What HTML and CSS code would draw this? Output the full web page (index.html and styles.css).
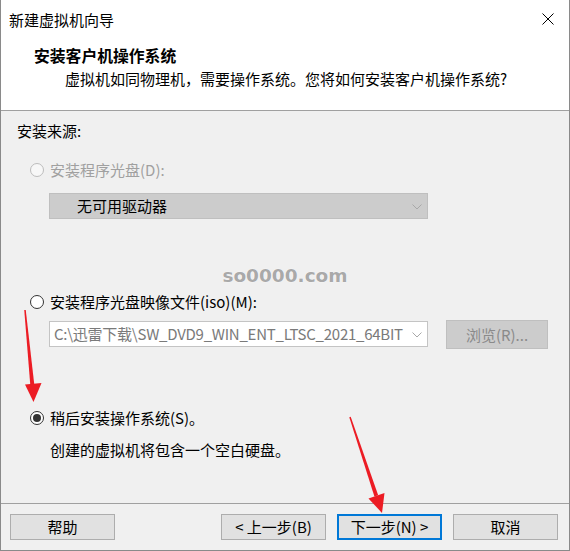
FILE: index.html
```html
<!DOCTYPE html>
<html lang="zh-CN">
<head>
<meta charset="utf-8">
<title>新建虚拟机向导</title>
<link rel="stylesheet" href="styles.css">
</head>
<body>
<div class="window">
  <div class="titlebar">
    <span class="title">新建虚拟机向导</span>
    <span class="close">
      <svg width="12" height="12" viewBox="0 0 12 12"><path d="M0.5 0.5 L11.5 11.5 M11.5 0.5 L0.5 11.5" stroke="#000" stroke-width="1" fill="none"/></svg>
    </span>
  </div>
  <div class="header">
    <div class="h-title">安装客户机操作系统</div>
    <div class="h-sub">虚拟机如同物理机，需要操作系统。您将如何安装客户机操作系统?</div>
  </div>
  <div class="main">
    <div class="source-label">安装来源:</div>
    <div class="option disabled"><span class="radio"></span><span>安装程序光盘(D):</span></div>
    <div class="combo disabled-combo">
      <span class="combo-text">无可用驱动器</span>
      <svg class="chev" width="10" height="6" viewBox="0 0 10 6"><path d="M0.5 0.5 L5 5 L9.5 0.5" stroke="#a8a8a8" stroke-width="1" fill="none"/></svg>
    </div>
    <div class="watermark">so0000.com</div>
    <div class="option"><span class="radio"></span><span>安装程序光盘映像文件(iso)(M):</span></div>
    <div class="file-row">
      <div class="combo file-combo">
        <span class="file-text">C:\迅雷下载\SW_DVD9_WIN_ENT_LTSC_2021_64BIT</span>
        <svg class="chev" width="10" height="6" viewBox="0 0 10 6"><path d="M0.5 0.5 L5 5 L9.5 0.5" stroke="#a8a8a8" stroke-width="1" fill="none"/></svg>
      </div>
      <div class="btn browse">浏览(R)...</div>
    </div>
    <div class="option"><span class="radio checked"></span><span>稍后安装操作系统(S)。</span></div>
    <div class="desc">创建的虚拟机将包含一个空白硬盘。</div>
  </div>
  <div class="footer">
    <div class="btn">帮助</div>
    <div class="spacer"></div>
    <div class="btn">&lt; 上一步(B)</div>
    <div class="btn default">下一步(N) &gt;</div>
    <div class="btn">取消</div>
  </div>
  <svg class="arrows" width="570" height="551" viewBox="0 0 570 551">
    <polygon fill="#ec1c24" points="25.75,309.93 24.25,310.07 30.3,385.2 34.3,384.8"/>
    <polygon fill="#ec1c24" points="33.5,402 41.5,383 25,384.6"/>
    <polygon fill="#ec1c24" points="350.71,416.76 349.29,417.24 374.4,496.5 378.2,495.3"/>
    <polygon fill="#ec1c24" points="382,513 384.5,493 368.5,498.4"/>
  </svg>
</div>
</body>
</html>
```

FILE: styles.css
```css
* { box-sizing: border-box; }
html, body { margin: 0; padding: 0; background: #fff; }
body {
  font-family: "Noto Sans CJK SC", "Noto Sans", sans-serif;
  font-size: 15px;
  color: #000;
}
.window {
  position: relative;
  width: 570px;
  height: 551px;
  border: 1px solid #8a8a8a;
  border-top: 0;
  display: flex;
  flex-direction: column;
  background: #f0f0f0;
}
.titlebar {
  height: 38px;
  background: #fff;
  display: flex;
  align-items: center;
  justify-content: space-between;
  padding: 0 15px 0 8px;
}
.title { font-size: 15px; line-height: 20px; padding-top: 1px; }
.close { display: flex; width: 12px; height: 12px; }
.header {
  height: 73px;
  background: #fff;
  border-bottom: 1px solid #a0a0a0;
  padding: 8px 0 0 33px;
}
.h-title {
  font-size: 15.8px;
  font-weight: bold;
  line-height: 20px;
}
.h-sub {
  margin: 3px 0 0 31px;
  font-size: 15px;
  line-height: 20px;
}
.main {
  height: 392px;
  padding-left: 16px;
}
.source-label {
  margin-top: 10px;
  line-height: 20px;
}
.option {
  display: flex;
  align-items: center;
  height: 20px;
  line-height: 20px;
  margin-left: 13px;
  gap: 6px;
}
.main > .option:nth-of-type(2) { margin-top: 19px; }
.radio {
  position: relative;
  width: 14px;
  height: 14px;
  border-radius: 50%;
  border: 1px solid #333;
  background: #fff;
  flex: none;
}
.radio.checked::after {
  content: "";
  position: absolute;
  left: 2px;
  top: 2px;
  width: 8px;
  height: 8px;
  border-radius: 50%;
  background: #333;
}
.option.disabled { color: #a0a0a0; }
.option.disabled .radio { border-color: #bcbcbc; background: #f7f7f7; }
.combo {
  display: flex;
  align-items: center;
  width: 379px;
  height: 26px;
  flex: none;
}
.disabled-combo {
  margin: 13px 0 0 32px;
  background: #cccccc;
  border: 1px solid #bfbfbf;
  padding-left: 27px;
}
.combo-text { flex: 1; line-height: 20px; }
.chev { flex: none; margin-right: 5px; margin-top: 1px; }
.watermark {
  margin: 45px 0 0 -16px;
  height: 24px;
  line-height: 24px;
  text-align: center;
  font-family: "DejaVu Sans", sans-serif;
  font-weight: bold;
  font-size: 18.5px;
  color: #a9a9a9;
  text-shadow: 0 0 1px #fff, 0 0 1px #fff;
}
.watermark + .option { margin-top: 4px; }
.file-row {
  display: flex;
  margin: 8px 0 0 32px;
  height: 29px;
  gap: 18px;
}
.file-combo {
  margin-top: 1px;
  background: #fff;
  border: 1px solid #c4c4c4;
  padding-left: 4px;
}
.file-text {
  flex: 1;
  white-space: nowrap;
  color: #7a7a7a;
  line-height: 20px;
  letter-spacing: -0.25px;
  margin-right: 4px;
}
.btn {
  width: 105px;
  height: 26px;
  background: #e1e1e1;
  border: 1px solid #adadad;
  display: flex;
  align-items: center;
  justify-content: center;
  line-height: 20px;
  flex: none;
}
.btn.browse {
  width: 102px;
  height: 29px;
  background: #cccccc;
  border-color: #bfbfbf;
  color: #8a8a8a;
}
.file-row + .option { margin-top: 59px; }
.desc {
  margin: 12px 0 0 33px;
  line-height: 20px;
}
.footer {
  flex: 1;
  border-top: 1px solid #a0a0a0;
  display: flex;
  gap: 11px;
  padding: 10px 11px 0 9px;
}
.spacer { flex: 1; }
.btn.default { border: 2px solid #0078d7; }
.arrows {
  position: absolute;
  left: -1px;
  top: 0;
  pointer-events: none;
}
```
